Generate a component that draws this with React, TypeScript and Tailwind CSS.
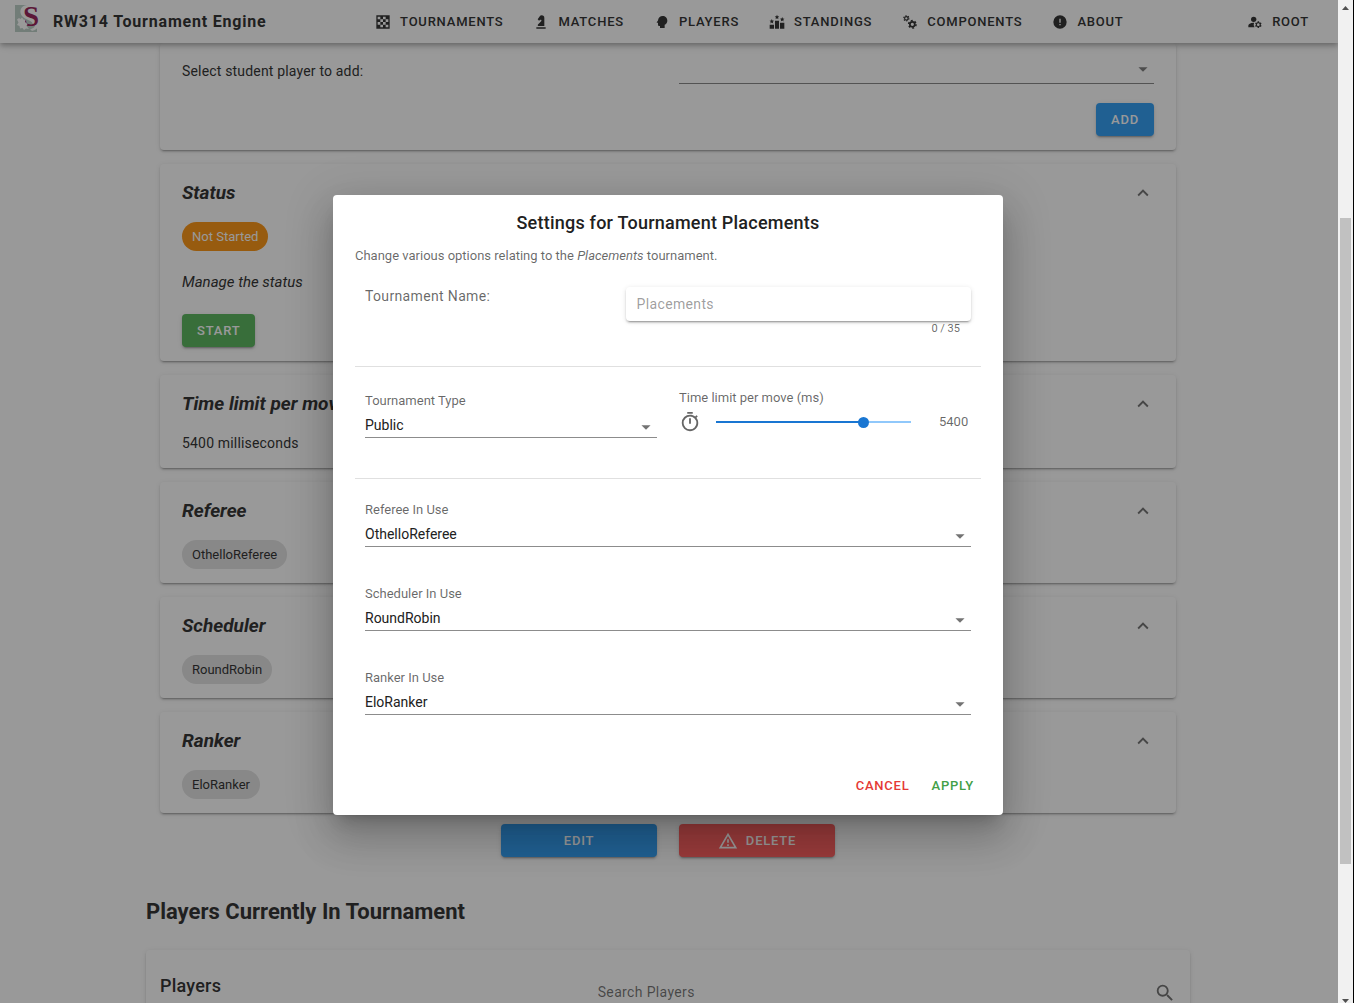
import React, { useState } from "react";
import { MdManageAccounts } from "react-icons/md";

const ICONS = {
  knight:
    "M19,22H5V20H19V22M13,2V2C11.75,2 10.58,2.62 9.89,3.66L7,8L9,10L11.06,8.63C11.5,8.32 12.14,8.44 12.45,8.9C12.47,8.93 12.5,8.96 12.5,9V9C12.8,9.59 12.69,10.3 12.22,10.77L7.42,15.57C6.87,16.13 6.87,17.03 7.43,17.58C7.69,17.84 8.05,18 8.42,18H17V6A4,4 0 0,0 13,2Z",
  head: "M13 3C9.23 3 6.19 5.95 6 9.66L4.08 12.19C3.84 12.5 4.08 13 4.5 13H6V16C6 17.11 6.89 18 8 18H9V21H16V16.31C18.37 15.19 20 12.8 20 10C20 6.14 16.88 3 13 3Z",
  alertCircle: "M13 13H11V7H13M13 17H11V15H13M12 2A10 10 0 1 0 22 12 10 10 0 0 0 12 2Z",
  alert: "M12,2L1,21H23M12,6L19.53,19H4.47M11,10V14H13V10M11,16V18H13V16",
  timer:
    "M12,20A7,7 0 0,1 5,13A7,7 0 0,1 12,6A7,7 0 0,1 19,13A7,7 0 0,1 12,20M19.03,7.39L20.45,5.97C20,5.46 19.55,5 19.04,4.56L17.62,6C16.07,4.74 14.12,4 12,4A9,9 0 0,0 3,13A9,9 0 0,0 12,22C17,22 21,17.97 21,13C21,10.88 20.26,8.93 19.03,7.39M11,14H13V8H11M15,1H9V3H15V1Z",
  chevronUp: "M7.41,15.41L12,10.83L16.59,15.41L18,14L12,8L6,14L7.41,15.41Z",
  magnify:
    "M9.5,3A6.5,6.5 0 0,1 16,9.5C16,11.11 15.41,12.59 14.44,13.73L14.71,14H15.5L20.5,19L19,20.5L14,15.5V14.71L13.73,14.44C12.59,15.41 11.11,16 9.5,16A6.5,6.5 0 0,1 3,9.5A6.5,6.5 0 0,1 9.5,3M9.5,5C7,5 5,7 5,9.5C5,12 7,14 9.5,14C12,14 14,12 14,9.5C14,7 12,5 9.5,5Z",
  menuDown: "M7,10L12,15L17,10H7Z",
  checkerboard:
    "M2 2H22V22H2ZM4 4H8V8H4ZM12 4H16V8H12ZM8 8H12V12H8ZM16 8H20V12H16ZM4 12H8V16H4ZM12 12H16V16H12ZM8 16H12V20H8ZM16 16H20V20H16Z",
};

function Icon({ name, className }: { name: keyof typeof ICONS; className: string }) {
  return (
    <svg viewBox="0 0 24 24" fill="currentColor" fillRule="evenodd" className={className} aria-hidden="true">
      <path d={ICONS[name]} />
    </svg>
  );
}

function Star({ x, y }: { x: number; y: number }) {
  return (
    <path
      transform={`translate(${x} ${y})`}
      d="M0 -3.4L1 -1.1L3.4 -0.9L1.6 0.8L2.1 3.1L0 1.9L-2.1 3.1L-1.6 0.8L-3.4 -0.9L-1 -1.1Z"
    />
  );
}

function PodiumIcon() {
  return (
    <svg viewBox="0 0 24 24" fill="currentColor" className="size-4" aria-hidden="true">
      <path d="M1 16H7.5V22H1ZM9 10H15V22H9ZM16.5 13H23V22H16.5Z" />
      <Star x={4.2} y={11} />
      <Star x={12} y={4.6} />
      <Star x={19.8} y={8} />
    </svg>
  );
}

function GearsIcon() {
  return (
    <svg viewBox="0 0 24 24" fill="none" stroke="currentColor" className="size-4" aria-hidden="true">
      <circle cx="6.5" cy="6.5" r="2.6" strokeWidth="1.7" />
      <circle cx="6.5" cy="6.5" r="3.8" strokeWidth="1.8" strokeDasharray="1.99 1.99" />
      <circle cx="15.5" cy="15.5" r="3.7" strokeWidth="2.6" />
      <circle cx="15.5" cy="15.5" r="5.6" strokeWidth="2.2" strokeDasharray="2.93 2.93" />
    </svg>
  );
}

function Logo() {
  return (
    <svg viewBox="0 0 26 28" className="h-7 w-[26px] overflow-visible" role="img" aria-label="University logo">
      <rect x="0" y="0" width="22" height="27" fill="#b7cbc3" />
      <path d="M12 0C5 1 4 7 7 11C10 15 18 15 18 20C18 24 16 26 13 27H22V0Z" fill="#fff" />
      <path d="M17 21C17 24 15 26 11 27H22V19Z" fill="#b7cbc3" />
      <path d="M9 6C9 12 19 13 20 17C21 22 18 24 15 24L17 26C21 25 25 22 24 17L14 8Z" fill="#fff" />
      <text x="8" y="21" fontFamily="Liberation Serif" fontSize="29" fontWeight="bold" fill="#8e0f4c">
        S
      </text>
      <path
        d="M2 14.500L4 13L5.500 14L7 12.500L8.500 14.500L10.500 15L10 17L12.500 19L11.500 21L14 24L11 23.500L9 25L7.500 23L5 23.500L4.500 21L2 20L3.500 17.500Z"
        fill="#fff"
      />
    </svg>
  );
}

const NAV: { label: string; icon: React.ReactNode }[] = [
  { label: "Tournaments", icon: <Icon name="checkerboard" className="size-4" /> },
  { label: "Matches", icon: <Icon name="knight" className="size-4" /> },
  { label: "Players", icon: <Icon name="head" className="size-4" /> },
  { label: "Standings", icon: <PodiumIcon /> },
  { label: "Components", icon: <GearsIcon /> },
  { label: "About", icon: <Icon name="alertCircle" className="size-4" /> },
];

function NavLink({ label, icon }: { label: string; icon: React.ReactNode }) {
  return (
    <a href="#" className="flex items-center gap-[9px] px-[15px] text-[13px] font-medium uppercase tracking-[0.06em]">
      {icon}
      {label}
    </a>
  );
}

const CARD =
  "rounded bg-white px-[22px] shadow-[0_3px_1px_-2px_rgba(0,0,0,0.2),0_2px_2px_0_rgba(0,0,0,0.14),0_1px_5px_0_rgba(0,0,0,0.12)]";
const BUTTON =
  "flex h-[33px] items-center justify-center gap-2 rounded text-[13px] font-medium uppercase tracking-[0.06em] text-white shadow-[0_3px_1px_-2px_rgba(0,0,0,0.2),0_2px_2px_0_rgba(0,0,0,0.14),0_1px_5px_0_rgba(0,0,0,0.12)]";

function Panel({ title, children }: { title: string; children: React.ReactNode }) {
  return (
    <section className={`${CARD} pb-3.5 pt-3.5`}>
      <header className="flex h-[30px] items-center justify-between">
        <h3 className="text-[19px] font-bold italic">{title}</h3>
        <button aria-label={`Collapse ${title}`} className="text-black/60">
          <Icon name="chevronUp" className="size-[22px]" />
        </button>
      </header>
      {children}
    </section>
  );
}

function Chip({ children }: { children: string }) {
  return (
    <span className="mt-3.5 flex h-[29px] w-fit items-center rounded-full bg-[#e0e0e0] px-2.5 text-[13px]">
      {children}
    </span>
  );
}

function SelectField({ id, label, options }: { id: string; label: string; options: string[] }) {
  return (
    <div className="relative">
      <label htmlFor={id} className="block text-[13px] leading-5 text-black/60">
        {label}
      </label>
      <select
        id={id}
        className="mt-0.5 block h-[25px] w-full appearance-none border-b border-black/45 bg-transparent text-[14px] leading-5"
      >
        {options.map((o) => (
          <option key={o}>{o}</option>
        ))}
      </select>
      <Icon name="menuDown" className="pointer-events-none absolute bottom-0 right-0 size-[22px] text-black/55" />
    </div>
  );
}

function SettingsDialog() {
  const [limit, setLimit] = useState(5400);
  const [name, setName] = useState("");
  return (
    <div
      role="dialog"
      aria-modal="true"
      aria-labelledby="dialog-title"
      className="w-full max-w-[670px] rounded bg-white px-[22px] pb-3 pt-3.5 shadow-[0_11px_15px_-7px_rgba(0,0,0,0.2),0_24px_38px_3px_rgba(0,0,0,0.14),0_9px_46px_8px_rgba(0,0,0,0.12)]"
    >
      <h2 id="dialog-title" className="text-center text-[18px] font-medium leading-7 tracking-[0.0125em]">
        Settings for Tournament Placements
      </h2>
      <p className="mt-[9px] text-[13px] leading-5 text-black/60">
        Change various options relating to the <em>Placements</em> tournament.
      </p>

      <div className="mt-[21px] flex items-start justify-between pl-2.5 pr-2.5">
        <label htmlFor="name" className="text-[14px] leading-[18px] tracking-wide text-black/60">
          Tournament Name:
        </label>
        <div className="w-[57%]">
          <input
            id="name"
            value={name}
            maxLength={35}
            onChange={(e) => setName(e.target.value)}
            placeholder="Placements"
            className="block h-[34px] w-full rounded px-[11px] text-[14px] tracking-wide shadow-[0_3px_1px_-2px_rgba(0,0,0,0.2),0_2px_2px_0_rgba(0,0,0,0.14),0_1px_5px_0_rgba(0,0,0,0.12)] placeholder:text-black/40"
          />
          <p className="pr-[11px] text-right text-[11px] leading-[15px] text-black/60">{name.length} / 35</p>
        </div>
      </div>

      <hr className="mt-[30px] border-black/12" />

      <div className="mt-6 grid grid-cols-2 gap-[22px] pl-2.5 pr-2.5">
        <SelectField id="type" label="Tournament Type" options={["Public", "Private"]} />
        <div>
          <label htmlFor="limit" className="block text-[13px] leading-[14px] text-black/60">
            Time limit per move (ms)
          </label>
          <div className="mt-1.5 flex items-center">
            <Icon name="timer" className="size-[22px] text-black/60" />
            <input
              id="limit"
              type="range"
              min={0}
              max={7000}
              step={100}
              value={limit}
              onChange={(e) => setLimit(Number(e.target.value))}
              style={{ backgroundImage: `linear-gradient(to right, #1976d2 ${limit / 70}%, #90c8fb ${limit / 70}%)` }}
              className="ml-[15px] h-0.5 min-w-0 flex-1 appearance-none [&::-webkit-slider-thumb]:size-[11px] [&::-webkit-slider-thumb]:appearance-none [&::-webkit-slider-thumb]:rounded-full [&::-webkit-slider-thumb]:bg-[#1976d2]"
            />
            <output htmlFor="limit" className="ml-7 w-8 text-[13px] leading-5 text-black/60">
              {limit}
            </output>
          </div>
        </div>
      </div>

      <hr className="mt-10 border-black/12" />

      <div className="mt-[21px] flex flex-col gap-[37px] pl-2.5 pr-2.5">
        <SelectField id="referee" label="Referee In Use" options={["OthelloReferee"]} />
        <SelectField id="scheduler" label="Scheduler In Use" options={["RoundRobin"]} />
        <SelectField id="ranker" label="Ranker In Use" options={["EloRanker"]} />
      </div>

      <footer className="mt-[54px] flex justify-end gap-[22px] pr-[7px] text-[13px] font-medium tracking-[0.06em]">
        <button className="h-[34px] uppercase text-[#e53935]">Cancel</button>
        <button className="h-[34px] uppercase text-[#43a047]">Apply</button>
      </footer>
    </div>
  );
}

export default function App() {
  return (
    <div className="flex h-screen overflow-hidden bg-white font-[Roboto,sans-serif] text-[#212121]">
      <div className="relative flex min-w-0 flex-1 flex-col overflow-hidden">
        <header className="z-10 flex h-[43px] shrink-0 items-center justify-between bg-white pl-[15px] pr-3.5 shadow-[0_2px_4px_-1px_rgba(0,0,0,0.2),0_4px_5px_0_rgba(0,0,0,0.14),0_1px_10px_0_rgba(0,0,0,0.12)]">
          <div className="flex items-center gap-3">
            <div className="mb-1.5">
              <Logo />
            </div>
            <h1 className="text-[16px] font-bold tracking-wider">RW314 Tournament Engine</h1>
          </div>
          <nav className="flex">
            {NAV.map((n) => (
              <NavLink key={n.label} {...n} />
            ))}
          </nav>
          <NavLink label="Root" icon={<MdManageAccounts className="size-4" />} />
        </header>

        <main className="min-h-0 flex-1 overflow-hidden pr-0.5">
          <div className="mx-auto max-w-[1044px]">
            <div className="flex flex-col gap-3.5 px-3.5">
              <section className={`${CARD} pb-3.5 pt-3.5`}>
                <div className="grid grid-cols-2 items-center gap-[22px]">
                  <label htmlFor="student" className="pt-0.5 text-[14px] tracking-[0.0125em]">
                    Select student player to add:
                  </label>
                  <div className="relative">
                    <select
                      id="student"
                      className="block h-[27px] w-full appearance-none border-b border-black/50 bg-transparent text-[14px]"
                    />
                    <Icon
                      name="menuDown"
                      className="pointer-events-none absolute right-0 top-px size-[22px] text-black/55"
                    />
                  </div>
                </div>
                <div className="mt-[19px] flex justify-end">
                  <button className={`${BUTTON} bg-[#2196f3] px-[15px]`}>Add</button>
                </div>
              </section>

              <Panel title="Status">
                <span className="mt-3.5 flex h-[29px] w-fit items-center rounded-full bg-[#fb8c00] px-2.5 text-[13px] text-white">
                  Not Started
                </span>
                <p className="mt-5 text-[15px] italic leading-[22px]">Manage the status</p>
                <button className={`${BUTTON} mt-[21px] bg-[#4caf50] px-[15px]`}>Start</button>
              </Panel>
              <Panel title="Time limit per move">
                <p className="mt-[13px] text-[14px] leading-[22px] tracking-[0.0125em]">5400 milliseconds</p>
              </Panel>
              <Panel title="Referee">
                <Chip>OthelloReferee</Chip>
              </Panel>
              <Panel title="Scheduler">
                <Chip>RoundRobin</Chip>
              </Panel>
              <Panel title="Ranker">
                <Chip>EloRanker</Chip>
              </Panel>
            </div>

            <div className="mt-[11px] flex justify-center gap-[22px]">
              <button className={`${BUTTON} w-[156px] bg-[#2196f3]`}>Edit</button>
              <button className={`${BUTTON} w-[156px] bg-[#ff5252]`}>
                <Icon name="alert" className="size-5" />
                Delete
              </button>
            </div>

            <h2 className="mt-[39px] text-[22px] font-bold leading-8">Players Currently In Tournament</h2>

            <section className="mt-[22px] rounded bg-white px-3.5 pb-6 shadow-[0_3px_1px_-2px_rgba(0,0,0,0.2),0_2px_2px_0_rgba(0,0,0,0.14),0_1px_5px_0_rgba(0,0,0,0.12)]">
              <div className="grid grid-cols-[3fr_4fr] items-start gap-1">
                <h3 className="pt-[22px] text-[18px] font-medium leading-7 tracking-[0.0125em]">Players</h3>
                <div className="mt-7 flex h-[30px] items-center border-b border-black/40">
                  <input
                    aria-label="Search Players"
                    placeholder="Search Players"
                    className="min-w-0 flex-1 text-[14px] tracking-wide placeholder:text-black/60"
                  />
                  <Icon name="magnify" className="size-[22px] text-black/60" />
                </div>
              </div>
            </section>
          </div>
        </main>

        <div className="absolute inset-0 z-20 flex items-center justify-center bg-[#212121]/46 pr-0.5 pt-[7px]">
          <SettingsDialog />
        </div>
      </div>

      <div
        className="flex w-4 shrink-0 flex-col items-center border-r border-black bg-[#f1f1f1] text-[#505050]"
        aria-hidden="true"
      >
        <svg viewBox="0 0 7 4" className="mt-1.5 h-1 w-[7px]" fill="currentColor">
          <path d="M0 4L3.500 0L7 4Z" />
        </svg>
        <div className="mt-[208px] h-[646px] w-[11px] bg-[#c1c1c1]" />
        <svg viewBox="0 0 7 4" className="mt-auto h-1 w-[7px]" fill="currentColor">
          <path d="M0 0L3.500 4L7 0Z" />
        </svg>
      </div>
    </div>
  );
}
